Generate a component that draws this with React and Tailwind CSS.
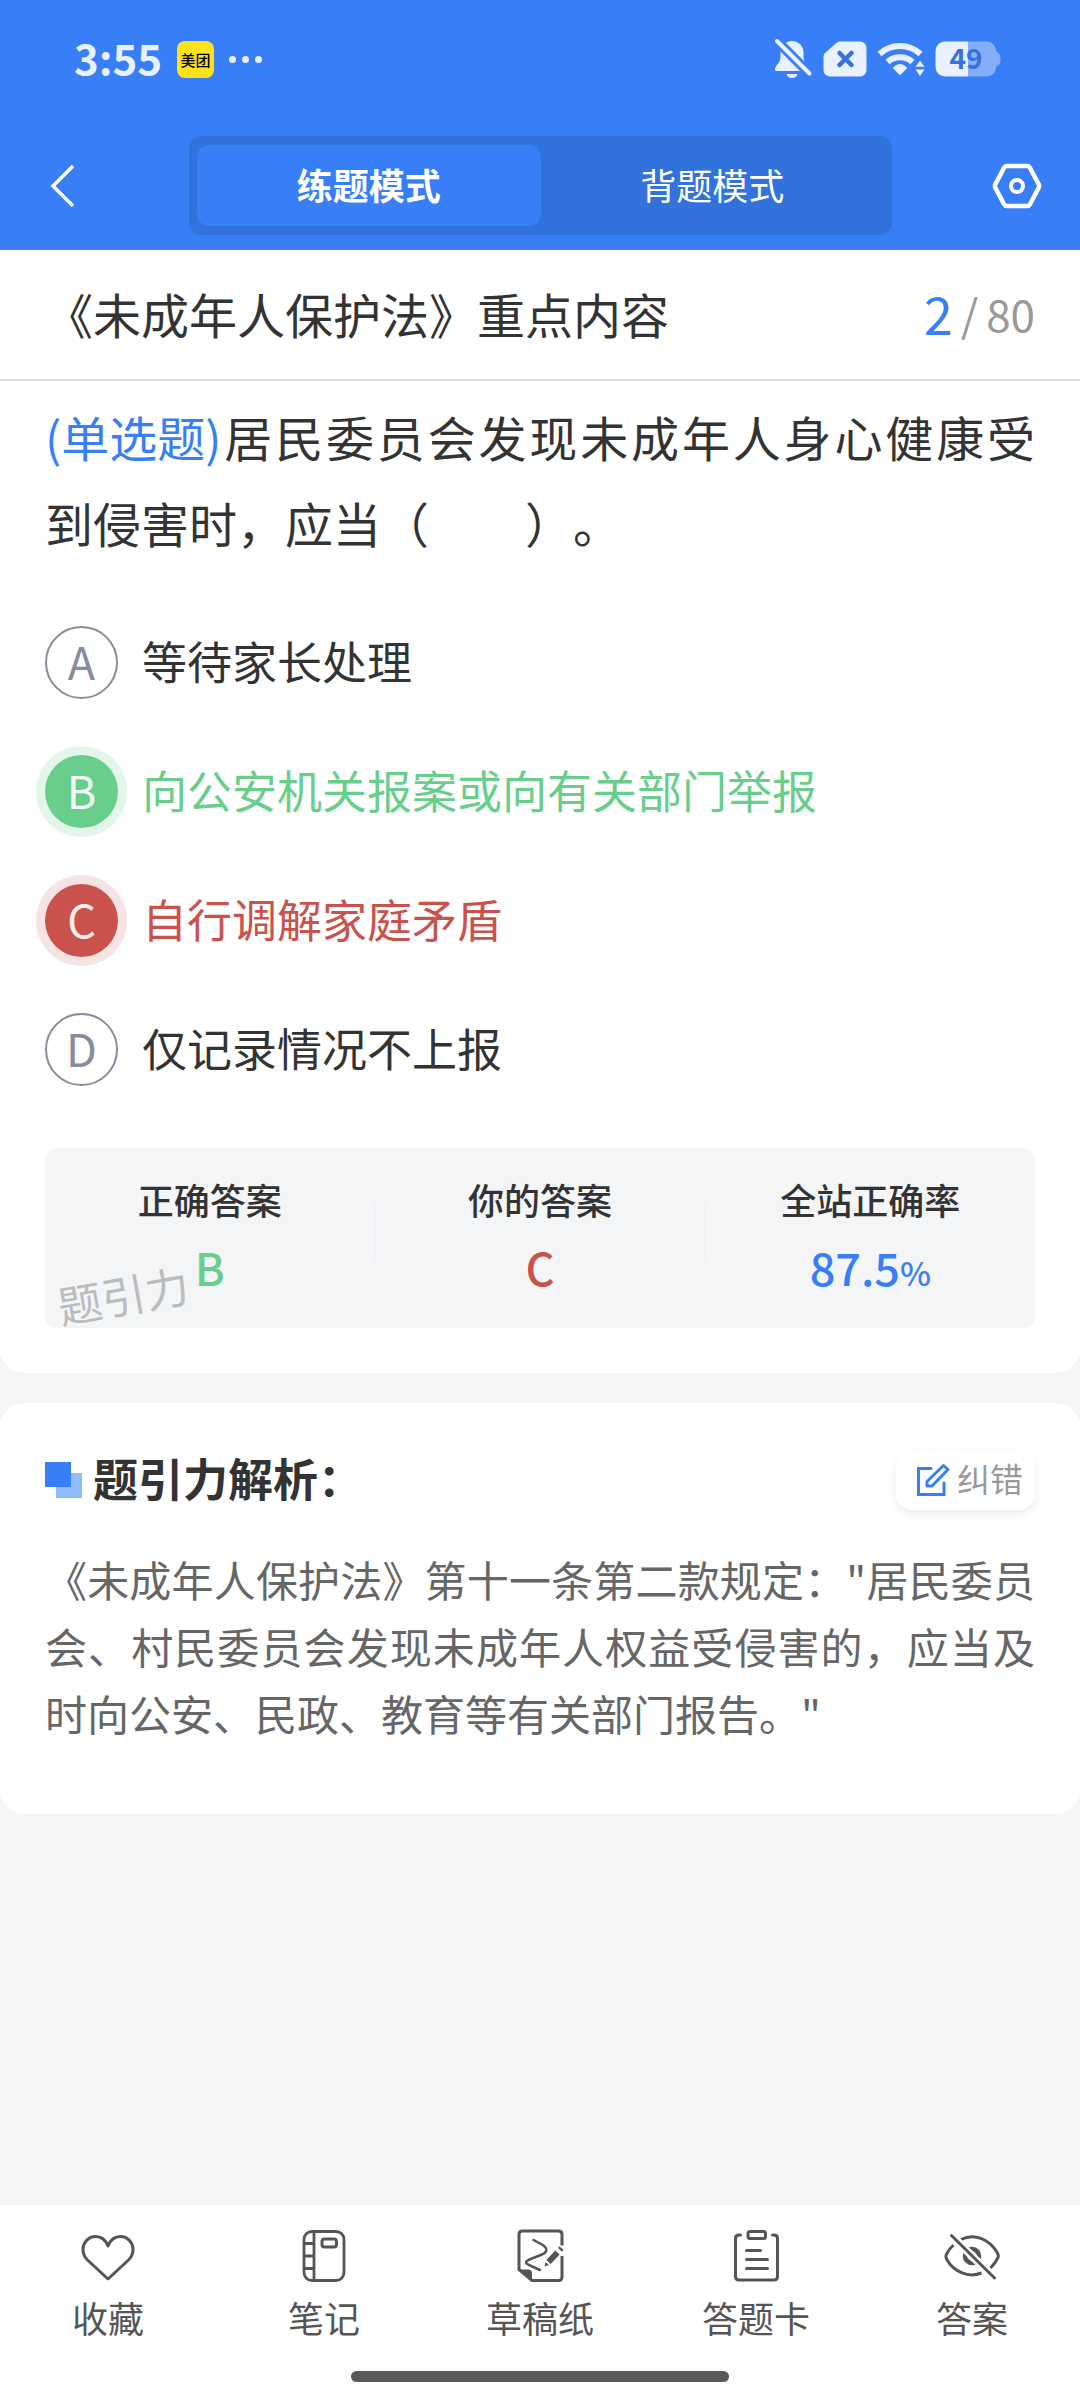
import React, { useState } from 'react';
import clsx from 'clsx';

const BellOffIcon = () => (
  <svg width="42" height="42" viewBox="0 0 42 42" fill="none" aria-hidden="true">
    <path d="M20 3C13.500 3 8.500 8 8.500 14V19C8.500 25 3 27.500 3 31.500C3 32.600 3.600 33 4.500 33H35.500C36.500 33 37 32.500 37 31.500C37 27.500 31.500 25 31.500 19V14C31.500 8 26.500 3 20 3Z" fill="#e9f0fe" />
    <path d="M14.500 36H25.500C25 38.500 22.800 40 20 40C17.200 40 15 38.500 14.500 36Z" fill="#e9f0fe" />
    <path d="M1 -1L41 39" stroke="#387ef7" strokeWidth="10" />
    <path d="M5 3L37.500 35.500" stroke="#e9f0fe" strokeWidth="4" strokeLinecap="round" />
  </svg>
);

const SimOffIcon = () => (
  <svg width="44" height="36" viewBox="0 0 44 36" fill="none" aria-hidden="true">
    <path d="M14 1.500C15 .8 16 .5 17.500 .5H36C40.500 .5 43.500 3 43.500 7.500V28.500C43.500 33 40.500 35.500 36 35.500H8C3.500 35.500 .5 33 .5 28.500V16C.5 14 1 13 2.500 11.500Z" fill="#e9f0fe" />
    <path d="M16.500 12L28.500 24M28.500 12L16.500 24" stroke="#3672dc" strokeWidth="4.500" strokeLinecap="round" />
  </svg>
);

const WifiIcon = () => (
  <svg width="50" height="40" viewBox="0 0 50 40" fill="none" aria-hidden="true">
    <path d="M3.500 15A30 30 0 0 1 44.500 15" stroke="#e9f0fe" strokeWidth="6" />
    <path d="M11.500 23A19 19 0 0 1 36.500 23" stroke="#e9f0fe" strokeWidth="6" />
    <path d="M16.700 29Q24 21 31.300 29L24.800 35.500Q24 36.200 23.200 35.500Z" fill="#e9f0fe" />
    <path d="M44 18.500L50 25V37H42L36.500 31Z" fill="#387ef7" />
    <path d="M44 21.500L48.500 27.700H39.500ZM39.500 30.500H48.500L44 37Z" fill="#e9f0fe" />
  </svg>
);

const BatteryIcon = () => (
  <svg width="66" height="48" viewBox="0 -6 66 48" fill="none" role="img" aria-label="49%">
    <path d="M33 .5H51C57 .5 60.500 4 61.500 11Q65.500 12 65.500 18T61.500 25C60.500 32 57 35.500 51 35.500H33Z" fill="#84aefa" />
    <path d="M33 .5H11C4 .5 .5 5 .5 11V25C.5 31 4 35.500 11 35.500H33Z" fill="#e9f0fe" />
    <text x="31" y="28" textAnchor="middle" fill="#3672dc" className="font-['Noto_Sans_CJK_SC',sans-serif] text-[28px] font-bold">49</text>
  </svg>
);

const BackIcon = () => (
  <svg width="26" height="44" viewBox="0 0 26 44" fill="none" aria-hidden="true">
    <path d="M23 2L3 22L23 42" stroke="white" strokeWidth="3.500" />
  </svg>
);

const SettingIcon = () => (
  <svg width="50" height="46" viewBox="0 0 50 46" fill="none" aria-hidden="true">
    <path d="M14.500 3H35.500Q37 3 37.800 4.500L46.800 21.500Q47.500 23 46.800 24.500L37.800 41.500Q37 43 35.500 43H14.500Q13 43 12.200 41.500L3.200 24.500Q2.500 23 3.200 21.500L12.200 4.500Q13 3 14.500 3Z" stroke="white" strokeWidth="4.500" />
    <circle cx="25" cy="23" r="6" stroke="white" strokeWidth="4" />
  </svg>
);

const EditIcon = () => (
  <svg width="34" height="34" viewBox="0 0 34 34" fill="none" stroke="#387ef7" strokeWidth="3" strokeLinecap="round" aria-hidden="true">
    <path d="M15 5.500H2.500V31.500H28V20" />
    <path d="M27.500 2.500L32 6.500L16 23H11V18.500Z" strokeLinejoin="round" />
  </svg>
);

const HeartIcon = () => (
  <svg width="56" height="56" viewBox="0 0 56 56" fill="none" stroke="#555" strokeWidth="3" strokeLinejoin="round" aria-hidden="true">
    <path d="M28 19C25.500 12.500 21 9.500 15.500 9.500C8.500 9.500 3 15.500 3 22.500C3 26.500 4.500 30 7.500 33L28 52L48.500 33C51.500 30 53 26.500 53 22.500C53 15.500 47.500 9.500 40.500 9.500C35 9.500 30.500 12.500 28 19Z" />
  </svg>
);

const NoteIcon = () => (
  <svg width="56" height="56" viewBox="0 0 56 56" fill="none" stroke="#555" strokeWidth="2.800" aria-hidden="true">
    <rect x="8" y="4.500" width="40" height="49" rx="8" />
    <path d="M18 4.500V53.500M8 16.500H18M8 29H18M8 41.500H18" />
    <rect x="26" y="12" width="14.500" height="8" rx="2.500" strokeWidth="3" />
  </svg>
);

const DraftIcon = () => (
  <svg width="56" height="56" viewBox="0 0 56 56" fill="none" stroke="#555" strokeWidth="3" aria-hidden="true">
    <path d="M50 18.500V7.500Q50 4 46.500 4H10.500Q7 4 7 7.500V42.500L20 53.500H46.500Q50 53.500 50 50V29" />
    <path d="M6 42.500H16Q20 42.500 20 46V54.500Z" fill="#555" stroke="none" />
    <path d="M21.500 13L30 17.500C35.500 21 36 24.500 30 27.500L17.500 32.500C13 34.500 13 36.500 17 38L28 43" strokeWidth="2.500" strokeLinecap="round" />
    <path d="M36.500 35L45.500 25.500" strokeWidth="6" />
    <path d="M48 22.800L49.500 21.200" strokeWidth="5.500" />
    <path d="M33.500 35L32.500 39.500L37 38Z" fill="#555" stroke="none" />
  </svg>
);

const CardIcon = () => (
  <svg width="56" height="56" viewBox="0 0 56 56" fill="none" stroke="#555" strokeWidth="3" strokeLinecap="round" aria-hidden="true">
    <path d="M12.500 8H11Q7.500 8 7.500 11.500V49.500Q7.500 53 11 53H46Q49.500 53 49.500 49.500V11.500Q49.500 8 46 8H44.500" />
    <rect x="20" y="4.500" width="17.500" height="7" rx="2" />
    <path d="M18.500 23.500H32.500M18.500 32.500H39.500M18.500 41.500H39.500" />
  </svg>
);

const EyeOffIcon = () => (
  <svg width="56" height="56" viewBox="0 0 56 56" fill="none" stroke="#555" strokeWidth="3" aria-hidden="true">
    <path d="M17 12.500C30 6 45 11.500 53.500 26Q55 29 53.500 31.500Q51 36.500 46.500 41" />
    <path d="M37.500 46C25 51 10 45.500 2.500 32Q1.500 29.500 2.500 27Q5 22 9.500 18" />
    <circle cx="28" cy="29" r="7" strokeWidth="4.500" />
    <path d="M8 9L50 51" stroke="white" strokeWidth="8" />
    <path d="M7.500 8.500L50.500 51" strokeLinecap="round" />
  </svg>
);

const modes = [
  { key: 'practice', label: '练题模式' },
  { key: 'recite', label: '背题模式' },
];

const options = [
  { key: 'A', text: '等待家长处理' },
  { key: 'B', text: '向公安机关报案或向有关部门举报' },
  { key: 'C', text: '自行调解家庭矛盾' },
  { key: 'D', text: '仅记录情况不上报' },
];

const correctAnswer = 'B';

const navItems = [
  { label: '收藏', icon: HeartIcon },
  { label: '笔记', icon: NoteIcon },
  { label: '草稿纸', icon: DraftIcon },
  { label: '答题卡', icon: CardIcon },
  { label: '答案', icon: EyeOffIcon },
];

const StatusBar = () => (
  <div className="flex h-[118px] items-center justify-between pl-[74px] pr-[79px]">
    <div className="flex items-center gap-[15px]">
      <span className="pb-1 text-[42px] leading-none font-bold text-[#e9f0fe]">3:55</span>
      <span className="flex size-[37px] items-center justify-center rounded-lg bg-[#ffe31a] text-[15px] leading-none font-medium text-black">美团</span>
      <span className="flex gap-[6px]">
        <i className="size-[7px] rounded-full bg-[#e9f0fe]" />
        <i className="size-[7px] rounded-full bg-[#e9f0fe]" />
        <i className="size-[7px] rounded-full bg-[#e9f0fe]" />
      </span>
    </div>
    <div className="flex items-center gap-[9px]">
      <BellOffIcon />
      <SimOffIcon />
      <WifiIcon />
      <BatteryIcon />
    </div>
  </div>
);

const Option = ({ option, selected, onSelect }) => {
  const isCorrect = option.key === correctAnswer;
  const isWrong = selected && !isCorrect;

  return (
    <label className="flex h-[129px] cursor-pointer items-center gap-6">
      <input
        type="radio"
        name="answer"
        value={option.key}
        checked={selected}
        onChange={onSelect}
        className="sr-only"
      />
      <span
        className={clsx(
          'flex size-[73px] shrink-0 items-center justify-center rounded-full pb-1 text-[45px] leading-none',
          isCorrect && 'bg-[#69ce8b] text-white/90 ring-[9px] ring-[#e2f7e9]',
          isWrong && 'bg-[#c9524d] text-white/90 ring-[9px] ring-[#f6e4e4]',
          !isCorrect && !isWrong && 'border-2 border-[#8a8b9c] text-[#8a8b9c]'
        )}
      >
        {option.key}
      </span>
      <span
        className={clsx(
          'pb-1 text-[45px] leading-[60px]',
          isCorrect && 'text-[#69ce8b]',
          isWrong && 'text-[#c9524d]',
          !isCorrect && !isWrong && 'text-[#333]'
        )}
      >
        {option.text}
      </span>
    </label>
  );
};

const Stat = ({ label, children }) => (
  <div className="flex flex-1 flex-col items-center gap-2">
    <dt className="text-[36px] leading-[60px] font-medium text-[#333]">{label}</dt>
    <dd className="text-[45px] leading-[60px] font-medium">{children}</dd>
  </div>
);

export default function App() {
  const [mode, setMode] = useState('practice');
  const [answer, setAnswer] = useState('C');

  return (
    <div className="flex min-h-screen flex-col bg-[#f4f5f7] font-['Noto_Sans_CJK_SC',sans-serif] [text-spacing-trim:space-all]">
      <header className="bg-[#387ef7]">
        <StatusBar />
        <div className="flex items-center justify-between pt-[18px] pr-[38px] pb-[15px] pl-[50px]">
          <button type="button" aria-label="返回" className="w-[139px]">
            <BackIcon />
          </button>
          <div className="flex h-[99px] flex-1 rounded-xl bg-[#3172dd] px-2 py-[9px]">
            {modes.map((item) => (
              <button
                key={item.key}
                type="button"
                aria-pressed={mode === item.key}
                onClick={() => setMode(item.key)}
                className={clsx(
                  'flex-1 rounded-xl pb-1 text-[36px] leading-[60px] text-white',
                  mode === item.key ? 'bg-[#387ef7] font-bold' : 'font-normal'
                )}
              >
                {item.label}
              </button>
            ))}
          </div>
          <button type="button" aria-label="设置" className="flex w-[150px] justify-end">
            <SettingIcon />
          </button>
        </div>
      </header>

      <main>
        <section className="rounded-b-3xl bg-white pb-[45px]">
          <div className="flex h-[131px] items-center justify-between border-b-2 border-[#dedfe1] px-[45px] pb-1">
            <h1 className="text-[48px] leading-[60px] text-[#333]">《未成年人保护法》重点内容</h1>
            <p className="flex items-center gap-2 text-[44px] leading-[60px] text-[#999]">
              <span className="text-[52px] text-[#387ef7]">2</span>
              <span>/</span>
              <span>80</span>
            </p>
          </div>

          {/* Question */}
          <div className="px-[45px] pt-3">
            <p className="text-justify text-[48px] leading-[86px] text-[#333]">
              <span className="inline-block text-[#387ef7]">(单选题)</span>
              居民委员会发现未成年人身心健康受到侵害时，应当（　　）。
            </p>

            <div role="radiogroup" aria-label="选项" className="mt-[33px]">
              {options.map((option) => (
                <Option
                  key={option.key}
                  option={option}
                  selected={answer === option.key}
                  onSelect={() => setAnswer(option.key)}
                />
              ))}
            </div>

            {/* Result */}
            <div className="relative mt-[34px] rounded-xl bg-[#f4f5f7] pt-[21px] pb-[31px]">
              <dl className="flex items-center">
                <Stat label="正确答案">
                  <span className="text-[#69ce8b]">{correctAnswer}</span>
                </Stat>
                <div className="h-[60px] w-px bg-[#eaebee]" />
                <Stat label="你的答案">
                  <span className="text-[#c9524d]">{answer}</span>
                </Stat>
                <div className="h-[60px] w-px bg-[#eaebee]" />
                <Stat label="全站正确率">
                  <span className="text-[#387ef7]">
                    87.5<span className="text-[33px] leading-none">%</span>
                  </span>
                </Stat>
              </dl>
              <span className="pointer-events-none absolute bottom-1 left-3 -rotate-10 text-[44px] leading-[60px] text-[#bbbcbd]">题引力</span>
            </div>
          </div>
        </section>

        {/* Analysis */}
        <section className="mt-[30px] rounded-3xl bg-white px-[45px] pt-[45px] pb-[68px]">
          <div className="flex items-center justify-between">
            <h2 className="flex items-center gap-[10px] text-[45px] leading-[60px] font-bold text-[#333]">
              <svg width="38" height="36" viewBox="0 0 38 36" aria-hidden="true">
                <rect x="11" y="11" width="26" height="25" fill="#8fbdfb" />
                <rect x="0" y="0" width="26" height="25" fill="#387ef7" />
              </svg>
              <span className="pb-1">题引力解析：</span>
            </h2>
            <button
              type="button"
              className="flex h-[60px] items-center gap-[7px] rounded-2xl bg-white pr-3 pl-5 text-[33px] leading-[45px] text-[#999] shadow-[0_4px_10px_rgba(0,0,0,0.08)]"
            >
              <EditIcon />
              <span className="pb-1">纠错</span>
            </button>
          </div>
          <p className="mt-[33px] text-justify text-[42px] leading-[67px] text-[#666]">
            《未成年人保护法》第十一条第二款规定："居民委员会、村民委员会发现未成年人权益受侵害的，应当及时向公安、民政、教育等有关部门报告。"
          </p>
        </section>
      </main>

      <footer className="mt-auto bg-white pt-[22px] pb-[18px]">
        <nav className="flex">
          {navItems.map((item) => (
            <button key={item.label} type="button" className="flex flex-1 flex-col items-center gap-1 text-[36px] leading-[60px] text-[#555]">
              <item.icon />
              {item.label}
            </button>
          ))}
        </nav>
        <div className="mx-auto mt-6 h-[11px] w-[35%] rounded-full bg-[#5a5a5a]" />
      </footer>
    </div>
  );
}
